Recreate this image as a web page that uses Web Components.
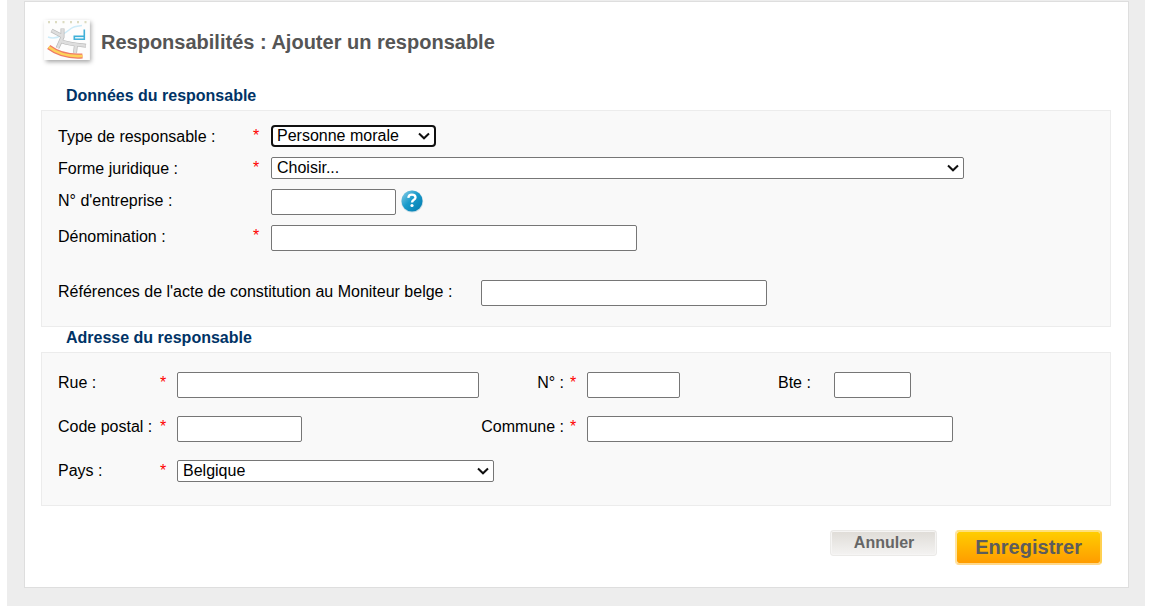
<!DOCTYPE html>
<html lang="fr">
<head>
<meta charset="utf-8">
<meta name="viewport" content="width=device-width, initial-scale=1">
<title>Responsabilités : Ajouter un responsable</title>
<style>
  body { margin: 0 7px; background: #fff; color: #000; font: 16px/22px "Liberation Sans", Arial, sans-serif; }
</style>
</head>
<body>
<page-card>
  <page-title>Responsabilités : Ajouter un responsable</page-title>
  <form-section heading="Données du responsable" layout="stack">
    <form-field label="Type de responsable :" required active type="select" value="Personne morale" style="--control: 165px"></form-field>
    <form-field label="Forme juridique :" required type="select" value="Choisir..." style="--control: 693px"></form-field>
    <form-field label="N° d'entreprise :" style="--control: 125px"><help-button></help-button></form-field>
    <form-field label="Dénomination :" required style="--control: 366px"></form-field>
    <form-field class="apart" label="Références de l'acte de constitution au Moniteur belge :" style="--label: 405px; --control: 286px"></form-field>
  </form-section>
  <form-section heading="Adresse du responsable" layout="grid">
    <form-field label="Rue :" required style="--control: 302px"></form-field>
    <form-field class="second" label="N° :" required style="--control: 93px"></form-field>
    <form-field label="Bte :" style="--label: 56px; --star: 0px; --control: 77px"></form-field>
    <form-field label="Code postal :" required style="--control: 125px"></form-field>
    <form-field class="second wide" label="Commune :" required style="--control: 366px"></form-field>
    <form-field class="full" label="Pays :" required type="select" value="Belgique" style="--control: 317px"></form-field>
  </form-section>
  <form-actions>
    <action-button>Annuler</action-button>
    <action-button kind="primary">Enregistrer</action-button>
  </form-actions>
</page-card>

<script>
function define(name, render) {
  customElements.define(name, class extends HTMLElement {
    constructor() {
      super();
      this.attachShadow({ mode: "open" });
    }
    connectedCallback() {
      this.shadowRoot.innerHTML = render(this);
    }
  });
}

define("page-card", () => `
  <style>
    :host { display: block; box-sizing: border-box; min-height: 100vh; padding: 1px 16px 18px 17px; background: #ededed; }
    main { padding: 14px 17px 22px 16px; background: #fff; border: 1px solid #dedede; }
  </style>
  <main><slot></slot></main>`);

define("page-title", () => `
  <style>
    :host { display: flex; align-items: center; margin-bottom: 17px; }
    svg { flex: none; display: block; }
    h1 { margin: 0; font-size: 20px; line-height: 24px; color: #555; }
  </style>
  <svg width="60" height="52" viewBox="41 16 60 52" aria-hidden="true">
    <defs>
      <filter id="s" x="-20%" y="-20%" width="150%" height="150%"><feDropShadow dx="1.5" dy="2" stdDeviation="2" flood-opacity=".35"/></filter>
    </defs>
    <path d="M44.500 20H89.500V60H44.500Z" fill="#fff" filter="url(#s)"/>
    <path d="M44.500 20H89.500V60H44.500Z" fill="#fdfdfd"/>
    <path d="M49 21v2.200M56 21v2.200M63.500 21v2.200M71 21v2.200M78 21v2.200M85.500 21v2.200" fill="none" stroke="#dcdbc0" stroke-width="2"/>
    <path d="M48 37c5 2 9 1 13-1.500S68 31 71 28.500s6-2.500 11-3" fill="none" stroke="#cdebf8" stroke-width="1.500"/>
    <g fill="none" stroke="#b9b9b9" stroke-width="4">
      <path d="M51.500 30.500L61 35.500M62.500 28.500V37L57.500 48M62 41.500C68 44 74 44.500 86 45.700M76 44.500L75 53"/>
    </g>
    <g fill="none" stroke="#dedede" stroke-width="2.600">
      <path d="M51.800 30.700L62 36M62.500 29V37L57.500 48M61 41C68 44 74 44.500 85.700 45.700M76 44L75 53"/>
    </g>
    <path d="M48.700 47C58 54 68 57 82.500 56" fill="none" stroke="#ef7b66" stroke-width="5.200"/>
    <path d="M48.700 47C58 54 68 57 82.500 56" fill="none" stroke="#fdd25a" stroke-width="2.600"/>
    <path d="M84.300 29.500V39.300H74.300V36.300H84" fill="#e4f4fa" stroke="#3fb0d8" stroke-width="1.600"/>
  </svg>
  <h1><slot></slot></h1>`);

define("form-section", el => `
  <style>
    :host { display: block; }
    h2 { margin: 0; padding: 1px 25px 4px; font-size: 16px; line-height: 20px; color: #003366; }
    div { background: #f9f9f9; border: 1px solid #ececec; }
    .stack { display: flex; flex-direction: column; gap: 10px; padding: 14px 16px 20px; --label: 195px; --star: 18px; --line: 24px; }
    .grid { display: grid; grid-template-columns: 423px 297px 1fr; row-gap: 18px; padding: 19px 16px 23px; --label: 102px; --star: 17px; --line: 22px; }
    .stack ::slotted(*) { max-height: 26px; }
    ::slotted(.apart) { margin-top: 19px; }
    ::slotted(.second) { --label: 89px; --align: right; }
    ::slotted(.wide) { grid-column: span 2; }
    ::slotted(.full) { grid-column: 1 / -1; }
  </style>
  <section aria-labelledby="h">
    <h2 id="h">${el.getAttribute("heading")}</h2>
    <div class="${el.getAttribute("layout")}"><slot></slot></div>
  </section>`);

define("form-field", el => {
  const required = el.hasAttribute("required");
  const isSelect = el.getAttribute("type") === "select";
  const control = isSelect
    ? `<select id="c" class="${el.hasAttribute("active") ? "active" : ""}"><option>${el.getAttribute("value")}</option></select>`
    : `<input id="c" type="text"${required ? " required" : ""}>`;
  return `
  <style>
    :host { display: flex; align-items: flex-start; }
    label { flex: none; display: flex; line-height: var(--line); height: 22px; }
    .text { width: var(--label); box-sizing: border-box; text-align: var(--align, left); padding-right: 6px; white-space: nowrap; }
    .star { width: var(--star); color: #f00; line-height: 22px; }
    input, select { box-sizing: border-box; margin: 0; width: var(--control); min-width: 0; max-width: 100%; font: inherit; color: #000; background: #fff; border: 1px solid #767676; border-radius: 2px; }
    input { height: 26px; padding: 1px 4px; }
    select { appearance: none; height: 22px; padding: 0 20px 0 5px; line-height: 20px;
      background: #fff url("data:image/svg+xml,%3Csvg xmlns='http://www.w3.org/2000/svg' width='12' height='8'%3E%3Cpath d='M1 1.500L6 6.300 11 1.500' fill='none' stroke='%23101010' stroke-width='2'/%3E%3C/svg%3E") no-repeat right 4px center; }
    select.active { border: 2px solid #101010; border-radius: 4px; padding-left: 4px; line-height: 18px; }
  </style>
  <label for="c"><span class="text">${el.getAttribute("label")}</span><span class="star">${required ? "*" : ""}</span></label>
  ${control}<slot></slot>`;
});

define("help-button", () => `
  <style>
    :host { display: block; margin-left: 5px; }
    button { display: block; margin: 0; padding: 0; border: 0; background: none; }
    svg { display: block; }
  </style>
  <button type="button" aria-label="Aide">
    <svg width="23" height="24" viewBox="0 0 23 24" aria-hidden="true">
      <defs><linearGradient id="g" x1="0" y1="0" x2="1" y2="1"><stop offset="0" stop-color="#8fd0e8"/><stop offset=".45" stop-color="#1a9bcb"/><stop offset="1" stop-color="#0079ad"/></linearGradient></defs>
      <circle cx="11.200" cy="12.500" r="11" fill="#c9dde6"/>
      <circle cx="11" cy="12" r="10.500" fill="url(#g)"/>
      <path d="M7.300 8.800c.2-2.200 1.600-3.200 3.600-3.200 2.200 0 3.600 1 3.600 2.800 0 2.400-3.500 2.400-3.500 5" fill="none" stroke="#fff" stroke-width="2.300"/>
      <circle cx="11" cy="16.500" r="1.600" fill="#fff"/>
    </svg>
  </button>`);

define("form-actions", () => `
  <style>
    :host { display: flex; justify-content: flex-end; align-items: flex-start; gap: 18px; padding: 24px 9px 0; }
  </style>
  <slot></slot>`);

define("action-button", el => {
  const primary = el.getAttribute("kind") === "primary";
  return `
  <style>
    :host { display: block; }
    button { display: block; box-sizing: border-box; margin: 0; font: bold 16px/20px "Liberation Sans", Arial, sans-serif; color: #666; border-radius: 3px;
      height: 26px; padding: 0 22px 0 23px; border: 1px solid #ebeae8; background: linear-gradient(#dfdcd7, #f4f3f2); box-shadow: inset 0 0 0 1px #f6f5f4; }
    .primary { font-size: 20px; line-height: 24px; color: #5c5c5c; height: 35px; padding: 0 18px 1px; border: 2px solid #ffdc70; border-radius: 4px;
      background: linear-gradient(#ffcd00, #ff9c00) padding-box; border-color: #ffe07a #ffd050 #ffd88a #ffe3a0; box-shadow: none; }
  </style>
  <button type="${primary ? "submit" : "button"}" class="${primary ? "primary" : ""}"><slot></slot></button>`;
});
</script>
</body>
</html>
